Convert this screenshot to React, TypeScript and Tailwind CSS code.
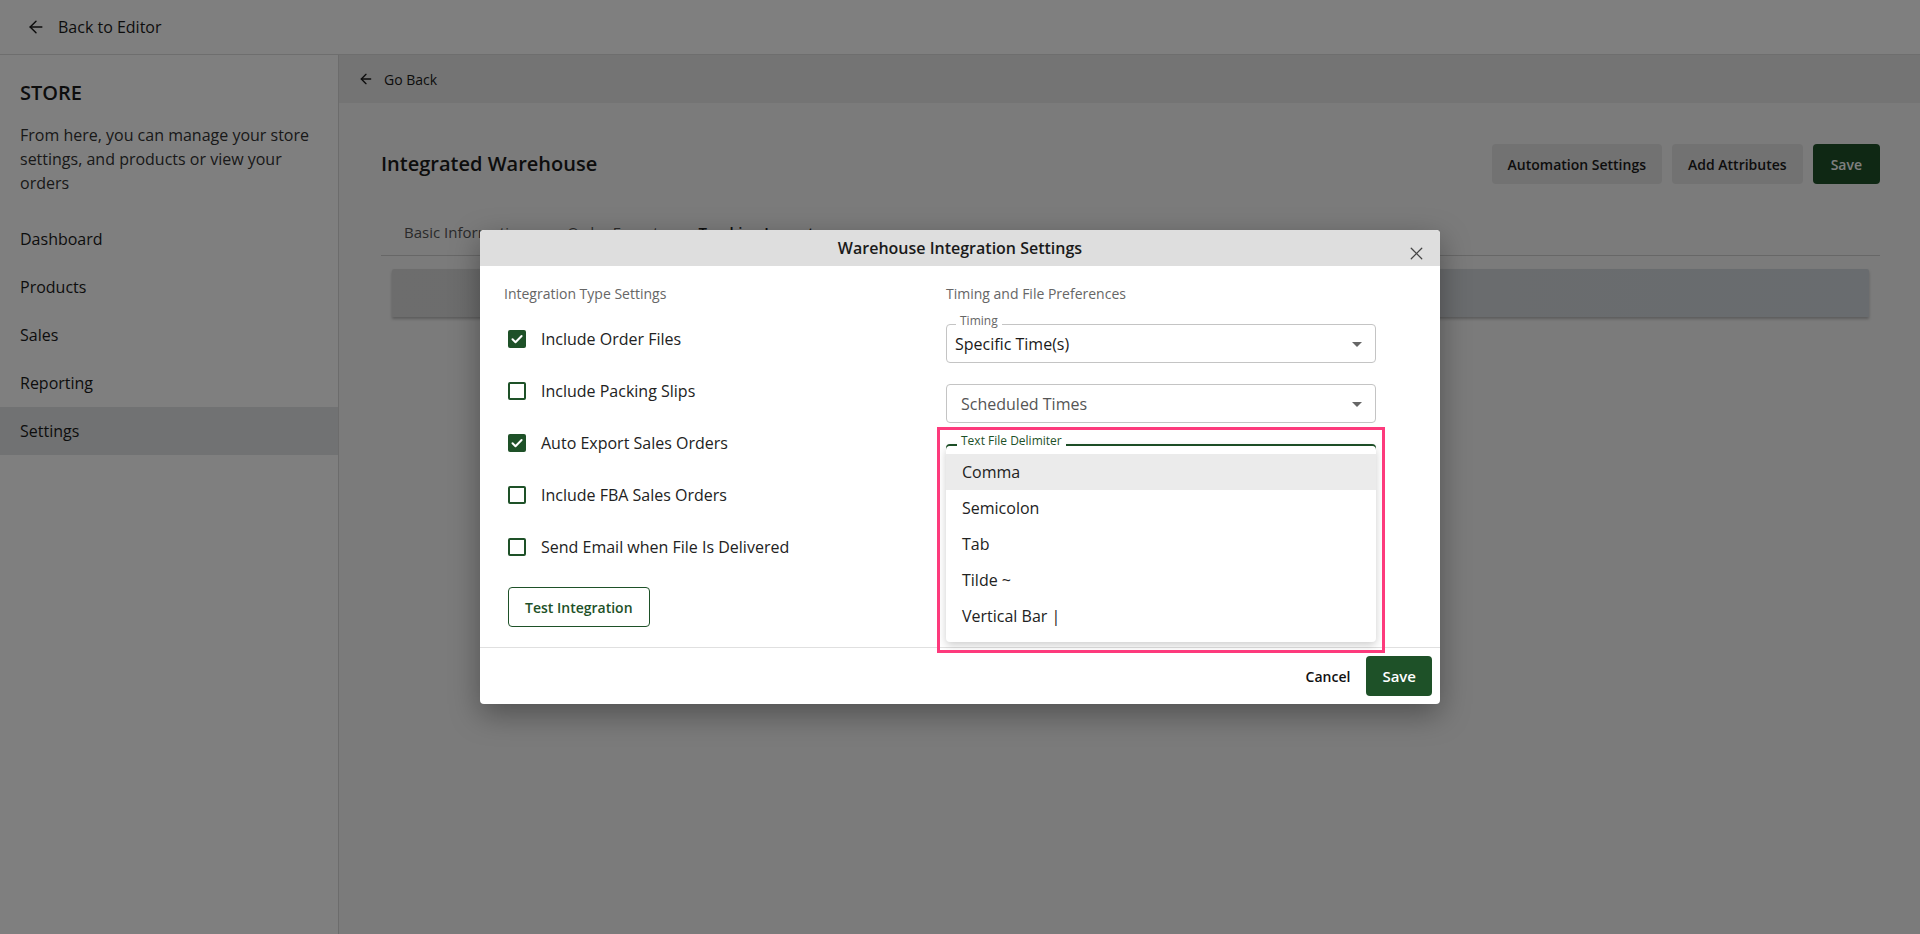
import { ArrowLeft, X } from "lucide-react";

const GREEN = "#1e5128";

const CheckBox = ({ checked }: { checked: boolean }) =>
  checked ? (
    <span className="flex h-[18px] w-[18px] items-center justify-center rounded-[2px] bg-[#1e5128]">
      <svg width="14" height="14" viewBox="0 0 14 14" fill="none">
        <path d="M2.5 7.2l3 3L11.6 4" stroke="white" strokeWidth="2" strokeLinecap="round" strokeLinejoin="round" />
      </svg>
    </span>
  ) : (
    <span className="h-[18px] w-[18px] rounded-[2px] border-2 border-[#1e5128] bg-white" />
  );

const Caret = () => (
  <svg width="24" height="24" viewBox="0 0 24 24" className="text-[#666]">
    <path d="M7 10l5 5 5-5z" fill="currentColor" />
  </svg>
);

const options = [
  { label: "Include Order Files", checked: true },
  { label: "Include Packing Slips", checked: false },
  { label: "Auto Export Sales Orders", checked: true },
  { label: "Include FBA Sales Orders", checked: false },
  { label: "Send Email when File Is Delivered", checked: false },
];

const delimiters = ["Comma", "Semicolon", "Tab", "Tilde ~", "Vertical Bar |"];

const menu = ["Dashboard", "Products", "Sales", "Reporting", "Settings"];

const App = () => {
  return (
    <div className="relative h-[934px] w-full overflow-hidden font-['Open_Sans',sans-serif] text-[#1a1a1a]">
      {/* page under the dialog */}
      <div className="flex h-full flex-col">
        <div className="flex h-[55px] shrink-0 items-center gap-3 border-b border-[#dcdcdc] bg-white pl-[26px]">
          <ArrowLeft size={20} strokeWidth={1.75} />
          <span className="text-[16px]">Back to Editor</span>
        </div>
        <div className="flex flex-1">
          <aside className="w-[339px] shrink-0 border-r border-[#d8d8d8] bg-white pt-[24px]">
            <div className="px-5 text-[20px] font-semibold leading-[28px]">STORE</div>
            <p className="mt-4 px-5 text-[16px] leading-[24px] text-[#333]">
              From here, you can manage your store settings, and products or view your orders
            </p>
            <nav className="mt-5">
              {menu.map((m) => (
                <div
                  key={m}
                  className={`flex h-12 items-center px-5 text-[16px] ${m === "Settings" ? "bg-[#e3e5e7]" : ""}`}
                >
                  {m}
                </div>
              ))}
            </nav>
          </aside>
          <main className="flex-1 bg-[#f6f6f6]">
            <div className="flex h-12 items-center gap-2.5 bg-[#e8e8e8] pl-[19px]">
              <ArrowLeft size={16} strokeWidth={2} />
              <span className="text-[14px] font-medium">Go Back</span>
            </div>
            <div className="pl-[42px] pr-[40px]">
              <div className="mt-[41px] flex h-10 items-center justify-between">
                <h1 className="text-[20px] font-semibold">Integrated Warehouse</h1>
                <div className="flex gap-2.5">
                  <button className="h-10 rounded-[4px] bg-[#e4e4e4] px-4 text-[14px] font-semibold">
                    Automation Settings
                  </button>
                  <button className="h-10 rounded-[4px] bg-[#e4e4e4] px-4 text-[14px] font-semibold">
                    Add Attributes
                  </button>
                  <button className="h-10 rounded-[4px] bg-[#1e5128] px-[18px] text-[14px] font-semibold text-white">
                    Save
                  </button>
                </div>
              </div>
              <div className="mt-[26px] flex h-[46px] items-center gap-[40px] border-b border-[#cfcfcf] pl-[23px] text-[15px]">
                <span className="text-[#555]">Basic Information</span>
                <span className="text-[#555]">Order Export</span>
                <span className="font-semibold">Tracking Import</span>
              </div>
              <div className="ml-[11px] mr-[11px] mt-[13px] h-12 rounded-t-[2px] bg-gradient-to-r from-[#dadada] to-[#d2d8de] shadow-[0_2px_3px_rgba(0,0,0,0.25)]" />
            </div>
          </main>
        </div>
      </div>

      {/* backdrop */}
      <div className="absolute inset-0 bg-black/50" />

      {/* dialog */}
      <div className="absolute inset-0 flex justify-center pt-[230px]">
        <div className="relative h-fit w-[960px] rounded-[4px] bg-white shadow-[0_10px_30px_rgba(0,0,0,0.35)]">
          <div className="relative flex h-9 items-center justify-center rounded-t-[4px] bg-[#dedede]">
            <span className="text-[16px] font-semibold">Warehouse Integration Settings</span>
            <X size={21} strokeWidth={1.4} className="absolute right-[13px] top-[13px] text-[#444]" />
          </div>

          <div className="flex h-[381px] pl-6 pt-[18px]">
            <div className="w-[442px]">
              <div className="text-[14px] leading-5 text-[#666]">Integration Type Settings</div>
              <div className="mt-[9px]">
                {options.map((o) => (
                  <div key={o.label} className="flex h-[52px] items-center gap-[15px] pl-1">
                    <CheckBox checked={o.checked} />
                    <span className="text-[16px] text-[#222]">{o.label}</span>
                  </div>
                ))}
              </div>
              <button className="ml-1 mt-[14px] h-10 rounded-[4px] border border-[#1e5128] px-4 text-[14px] font-semibold text-[#1e5128]">
                Test Integration
              </button>
            </div>

            <div className="w-[430px]">
              <div className="text-[14px] leading-5 text-[#666]">Timing and File Preferences</div>

              <div className="relative mt-5 flex h-[39px] items-center justify-between rounded-[4px] border border-[#c4c4c4] pl-2 pr-1.5">
                <span className="absolute -top-[12px] left-[9px] bg-white px-1 text-[12px] leading-4 text-[#666]">
                  Timing
                </span>
                <span className="text-[16px]">Specific Time(s)</span>
                <Caret />
              </div>

              <div className="mt-[21px] flex h-[39px] items-center justify-between rounded-[4px] border border-[#c4c4c4] pl-[14px] pr-1.5">
                <span className="text-[16px] text-[#555]">Scheduled Times</span>
                <Caret />
              </div>

              <div className="relative mt-[21px] h-[39px] rounded-[4px] border-2 border-[#1e5128]">
                <div className="absolute -left-[2px] -right-[2px] top-0 rounded-[4px] bg-white py-2 shadow-[0_3px_8px_rgba(0,0,0,0.2)]">
                  {delimiters.map((d, i) => (
                    <div
                      key={d}
                      className={`flex h-9 items-center px-4 text-[16px] text-[#222] ${i === 0 ? "bg-[#ebebeb]" : ""}`}
                    >
                      {d}
                    </div>
                  ))}
                </div>
                <span className="absolute -top-[13px] left-[9px] z-10 bg-white px-1 text-[12px] leading-4 text-[#1e5128]">
                  Text File Delimiter
                </span>
                <div className="pointer-events-none absolute -left-[11px] -top-[19px] h-[226px] w-[448px] border-[3px] border-[#fd3a7c]" />
              </div>
            </div>
          </div>

          <div className="flex h-[57px] items-center justify-end gap-4 border-t border-[#e0e0e0] pr-2">
            <button className="text-[14px] font-semibold" style={{ color: "#111" }}>
              Cancel
            </button>
            <button className="h-10 rounded-[4px] px-4 text-[15px] font-semibold text-white" style={{ backgroundColor: GREEN }}>
              Save
            </button>
          </div>
        </div>
      </div>
    </div>
  );
};

export default App;
